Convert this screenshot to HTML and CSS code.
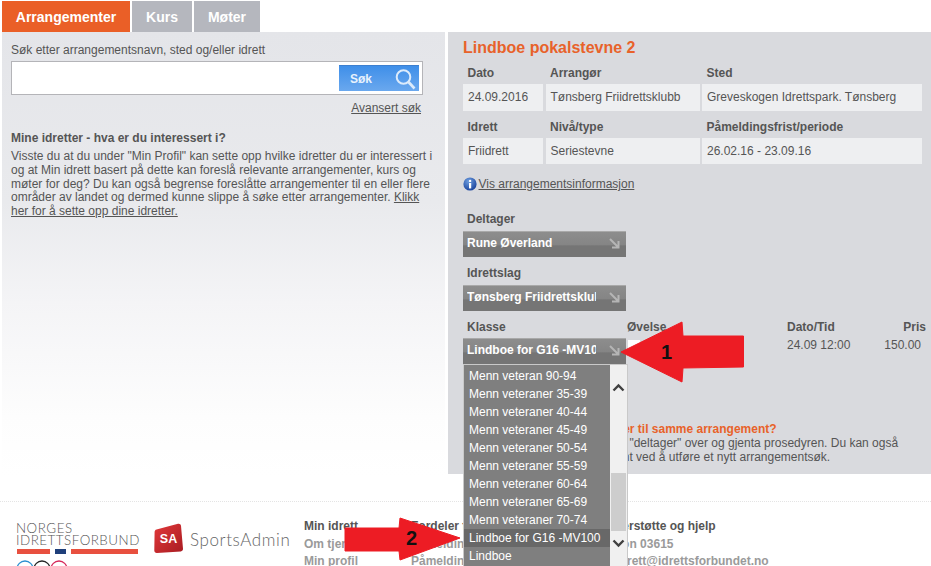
FILE: index.html
```html
<!DOCTYPE html>
<html lang="no">
<head>
<meta charset="utf-8">
<title>Min idrett</title>
<link rel="stylesheet" href="styles.css">
</head>
<body>
<div class="page">
  <nav class="tabs">
    <a class="tab tab-active">Arrangementer</a>
    <a class="tab tab-kurs">Kurs</a>
    <a class="tab tab-moter">Møter</a>
  </nav>
  <main class="main">
    <section class="left">
      <label class="search-label">Søk etter arrangementsnavn, sted og/eller idrett</label>
      <div class="search-box">
        <button class="search-btn"><span>Søk</span>
          <svg class="search-icon" width="24" height="24" viewBox="0 0 24 24"><circle cx="10.500" cy="10" r="6.800" fill="none" stroke="#dcebfb" stroke-width="2"/><path d="M15.500 15l6 6.500" stroke="#dcebfb" stroke-width="2.600" fill="none"/></svg>
        </button>
      </div>
      <div class="adv"><a class="ul">Avansert søk</a></div>
      <h3 class="left-h">Mine idretter - hva er du interessert i?</h3>
      <p class="left-p">Visste du at du under "Min Profil" kan sette opp hvilke idretter du er interessert i og at Min idrett basert på dette kan foreslå relevante arrangementer, kurs og møter for deg? Du kan også begrense foreslåtte arrangementer til en eller flere områder av landet og dermed kunne slippe å søke etter arrangementer. <a class="ul">Klikk her for å sette opp dine idretter.</a></p>
    </section>
    <section class="right">
      <h2 class="title">Lindboe pokalstevne 2</h2>
      <div class="info-grid">
        <div class="th">Dato</div><div class="th">Arrangør</div><div class="th">Sted</div>
        <div class="td">24.09.2016</div><div class="td">Tønsberg Friidrettsklubb</div><div class="td">Greveskogen Idrettspark. Tønsberg</div>
        <div class="th">Idrett</div><div class="th">Nivå/type</div><div class="th">Påmeldingsfrist/periode</div>
        <div class="td">Friidrett</div><div class="td">Seriestevne</div><div class="td">26.02.16 - 23.09.16</div>
      </div>
      <div class="info-link">
        <svg class="info-icon" width="14" height="14" viewBox="0 0 14 14"><defs><radialGradient id="ig" cx="40%" cy="30%" r="75%"><stop offset="0" stop-color="#6f9fe0"/><stop offset="1" stop-color="#16409a"/></radialGradient></defs><circle cx="7" cy="7" r="6.600" fill="url(#ig)"/><rect x="6" y="6" width="2.200" height="5.400" fill="#fff"/><circle cx="7.100" cy="3.900" r="1.200" fill="#fff"/></svg><a class="ul">Vis arrangementsinformasjon</a>
      </div>
      <div class="fld-label fld-first">Deltager</div>
      <div class="select"><span class="select-text">Rune Øverland</span><svg class="sel-arrow" width="11" height="11" viewBox="0 0 11 11"><path d="M1 1l8 8M9.500 3v6.500H3" fill="none" stroke="#b5b5b5" stroke-width="2"/></svg></div>
      <div class="fld-label">Idrettslag</div>
      <div class="select"><span class="select-text">Tønsberg Friidrettsklubb</span><svg class="sel-arrow" width="11" height="11" viewBox="0 0 11 11"><path d="M1 1l8 8M9.500 3v6.500H3" fill="none" stroke="#b5b5b5" stroke-width="2"/></svg></div>
      <div class="class-grid">
        <div class="th2 pad">Klasse</div><div class="th2">Øvelse</div><div class="th2">Dato/Tid</div><div class="th2 pris">Pris</div>
        <div class="select"><span class="select-text">Lindboe for G16 -MV100</span><svg class="sel-arrow" width="11" height="11" viewBox="0 0 11 11"><path d="M1 1l8 8M9.500 3v6.500H3" fill="none" stroke="#b5b5b5" stroke-width="2"/></svg></div>
        <div class="check-cell"><span class="check"></span></div>
        <div class="val">24.09 12:00</div>
        <div class="val val-price">150.00</div>
      </div>
      <div class="note">
        <h4 class="note-h">Vil du melde på flere deltager til samme arrangement?</h4>
        <p class="note-p">Velg så en ny deltager i feltet "deltager" over og gjenta prosedyren. Du kan også<br>meld på et annet arrangement ved å utføre et nytt arrangementsøk.</p>
      </div>
    </section>
  </main>
  <footer class="footer">
    <div class="nif">
      <div class="nif-text">NORGES<br>IDRETTSFORBUND</div>
      <div class="nif-bars"><i class="bar bar-a"></i><i class="bar bar-b"></i><i class="bar bar-c"></i></div>
      <svg class="rings" width="60" height="12" viewBox="0 0 60 12"><circle cx="9" cy="10" r="8" fill="none" stroke="#2a8fd0" stroke-width="1.300"/><circle cx="26" cy="10" r="8" fill="none" stroke="#222" stroke-width="1.300"/><circle cx="43" cy="10" r="8" fill="none" stroke="#d6285a" stroke-width="1.300"/></svg>
    </div>
    <div class="sa">
      <svg width="30" height="31" viewBox="0 0 30 31"><defs><linearGradient id="sg" x1="0" y1="0" x2="1" y2="1"><stop offset="0" stop-color="#e2383a"/><stop offset="1" stop-color="#a81c22"/></linearGradient></defs><path d="M2.500 6.500L24 .8c1.500-.4 2.800.5 3 2l2 23c.1 1.500-.8 2.500-2.200 2.600L3 30c-1.600.1-2.700-.8-2.700-2.400L.6 9c0-1.200.7-2.200 1.900-2.500z" fill="url(#sg)"/><text x="14.500" y="20" text-anchor="middle" class="sa-mark">SA</text></svg>
      <span class="sa-name">SportsAdmin</span>
    </div>
    <div class="fcol fcol-1"><b class="fh">Min idrett</b><a>Om tjenesten</a><a>Min profil</a></div>
    <div class="fcol fcol-2"><b class="fh">Fordeler for deg</b><a>Påmelding</a><a>Påmelding</a></div>
    <div class="fcol fcol-3"><b class="fh">Brukerstøtte og hjelp</b><a>Telefon 03615</a><a>minidrett@idrettsforbundet.no</a></div>
  </footer>

  <div class="dropdown">
    <ul class="dd-list">
      <li>Menn veteran 90-94</li>
      <li>Menn veteraner 35-39</li>
      <li>Menn veteraner 40-44</li>
      <li>Menn veteraner 45-49</li>
      <li>Menn veteraner 50-54</li>
      <li>Menn veteraner 55-59</li>
      <li>Menn veteraner 60-64</li>
      <li>Menn veteraner 65-69</li>
      <li>Menn veteraner 70-74</li>
      <li class="dd-sel">Lindboe for G16 -MV100</li>
      <li>Lindboe</li>
    </ul>
    <div class="dd-scroll">
      <svg class="chev chev-up" width="13" height="9" viewBox="0 0 13 9"><path d="M1.500 7.500l5-5 5 5" fill="none" stroke="#404040" stroke-width="2.400"/></svg>
      <div class="dd-thumb"></div>
      <svg class="chev chev-down" width="13" height="9" viewBox="0 0 13 9"><path d="M1.500 1.500l5 5 5-5" fill="none" stroke="#404040" stroke-width="2.400"/></svg>
    </div>
  </div>

  <div class="callout callout-1">
    <svg width="123" height="61" viewBox="0 0 123 61"><path d="M0 30L61 0l1 14h60.500v31L62 46l-1 14z" fill="#ed1c24" stroke="#ed1c24" stroke-linejoin="round"/><text x="40" y="37" class="callout-num">1</text></svg>
  </div>
  <div class="callout callout-2">
    <svg width="116" height="43" viewBox="0 0 116 43"><path d="M0 10h54l1-10 60 20-60 22-1-9H0z" fill="#ed1c24" stroke="#ed1c24" stroke-linejoin="round"/><text x="61" y="27" class="callout-num">2</text></svg>
  </div>
</div>
</body>
</html>
```

FILE: styles.css
```css
* { box-sizing: border-box; }
html, body { margin: 0; padding: 0; background: #fff; }
body { font-family: "Liberation Sans", Arial, sans-serif; font-size: 12px; color: #555; }
.page { position: relative; width: 931px; height: 566px; overflow: hidden; }
h2, h3, h4, p, ul { margin: 0; padding: 0; }
.ul { text-decoration: underline; color: #555; }

.tabs { display: flex; gap: 2px; height: 32px; padding: 1px 0 0 2px; }
.tab { display: flex; align-items: center; justify-content: center; height: 31px; background: #b5b7be; color: #fff; font-weight: 700; font-size: 14px; }
.tab-active { width: 128px; background: #ea5f27; }
.tab-kurs { width: 60px; }
.tab-moter { width: 66px; }

.main { display: flex; gap: 3px; padding-left: 2px; }
.left { width: 443px; height: 444px; padding: 11px 0 0 9px; background: linear-gradient(#e4e5e9 0, #e9eaed 170px, #f4f4f6 270px, #fdfdfd 385px, #fff 444px); }
.search-label { display: block; line-height: 14px; }
.search-box { display: flex; justify-content: flex-end; align-items: center; width: 412px; height: 34px; margin-top: 4px; padding-right: 3px; background: #fff; border: 1px solid #b4b4b8; }
.search-btn { display: flex; align-items: center; justify-content: space-between; width: 80px; height: 26px; padding: 0 2px 0 11px; border: 0; border-top: 1px solid #3d7fcf; background: linear-gradient(#3f8fe9, #6aa8ee); color: #e8f2fc; font: 700 12px "Liberation Sans", Arial, sans-serif; }
.search-icon { display: block; }
.adv { width: 410px; margin-top: 6px; line-height: 14px; text-align: right; }
.left-h { margin-top: 16px; font-size: 12px; line-height: 14px; font-weight: 700; }
.left-p { width: 425px; margin-top: 5px; line-height: 13.800px; }

.right { flex: 1; height: 442px; padding: 6px 0 0 15px; background: #d9dade; }
.title { height: 20px; font-size: 16px; line-height: 20px; font-weight: 700; color: #e8622a; }
.info-grid { display: grid; grid-template-columns: 80px 154px 220px; grid-template-rows: 24px 27px 27px 26px; column-gap: 2.500px; margin-top: 2px; }
.th { align-self: end; padding: 0 0 4px 4.500px; line-height: 14px; font-weight: 700; }
.td { display: flex; align-items: center; padding: 0 0 1px 5px; background: #eeeff1; }
.info-link { display: flex; align-items: center; height: 14px; margin-top: 13px; }
.info-icon { display: block; margin-right: 1.500px; }
.fld-label { margin-top: 9px; padding-left: 4px; line-height: 14px; font-weight: 700; }
.fld-first { margin-top: 21px; }
.select { display: flex; align-items: center; justify-content: space-between; width: 163px; height: 26px; margin-top: 5px; padding: 0 6px 3px 4px; background: linear-gradient(#8d8d8d, #858585 50%, #757575 56%, #757575); border-top: 1px solid #a9a9a9; color: #fff; font-weight: 700; }
.select-text { display: block; width: 129px; overflow: hidden; white-space: nowrap; }
.sel-arrow { display: block; }
.class-grid { display: grid; grid-template-columns: 164px 160px 1fr 50px; margin-top: 9px; }
.th2 { line-height: 14px; font-weight: 700; }
.pad { padding-left: 4px; }
.pris { text-align: right; padding-right: 5px; }
.class-grid .select { margin-top: 4px; }
.check-cell { padding: 6px 0 0 1px; }
.check { display: block; width: 12px; height: 12px; background: #fff; }
.val { padding-top: 4px; line-height: 14px; }
.val-price { margin-left: -20px; text-align: right; padding-right: 10px; }
.note { padding: 58px 0 0 5px; }
.note-h { font-size: 12px; line-height: 14px; font-weight: 700; color: #e8622a; }
.note-p { padding-left: 4px; white-space: nowrap; line-height: 14px; }

.footer { position: relative; display: flex; height: 68px; margin-top: 25px; padding: 16px 0 0 16px; border-top: 1px dotted #e4e4e4; }
.nif { width: 124px; }
.nif-text { font-family: Lato, "Liberation Sans", sans-serif; font-size: 13.400px; font-weight: 300; line-height: 11.500px; letter-spacing: .5px; color: #555; padding-top: 5px; white-space: nowrap; }
.nif-bars { display: flex; gap: 5px; margin-top: 3px; padding-left: 1px; }
.bar { display: block; height: 5px; }
.bar-a { width: 33px; background: #e8503f; }
.bar-b { width: 11px; background: #1f3f7a; }
.bar-c { width: 67px; background: #e8503f; }
.rings { display: block; margin-top: 5px; }
.sa { display: flex; align-items: flex-start; gap: 6px; width: 150px; margin-left: 14px; padding-top: 5px; }
.sa-mark { font: 700 12.500px "Liberation Sans", Arial, sans-serif; fill: #fff; }
.sa-name { font-family: Lato, "Liberation Sans", sans-serif; font-weight: 300; font-size: 17px; letter-spacing: .6px; line-height: 33px; color: #666; }
.fcol { display: flex; flex-direction: column; line-height: 17.500px; font-weight: 700; color: #9a9a9a; white-space: nowrap; }
.fh { color: #555; }
.fcol-1 { width: 107px; }
.fcol-2 { width: 184px; }

.dropdown { position: absolute; left: 463px; top: 364px; display: flex; width: 165px; height: 203px; background: #f0f0f0; border: 1px solid #c9c9c9; }
.dd-list { width: 146px; height: 201px; padding-top: 2px; list-style: none; background: #7f7f7f; color: #fff; overflow: hidden; }
.dd-list li { height: 18px; padding-left: 5px; line-height: 18px; white-space: nowrap; }
.dd-list .dd-sel { background: #686868; }
.dd-scroll { position: relative; flex: 1; }
.dd-thumb { position: absolute; left: 1px; right: 1px; top: 108px; height: 58px; background: #cdcdcd; }
.chev { position: absolute; left: 2px; }
.chev-up { top: 18px; }
.chev-down { top: 174px; }

.callout { position: absolute; }
.callout svg { display: block; overflow: visible; }
.callout-1 { left: 621px; top: 322px; }
.callout-2 { left: 345px; top: 518px; }
.callout-num { font: 700 20px "Liberation Sans", Arial, sans-serif; fill: #111; }
```
